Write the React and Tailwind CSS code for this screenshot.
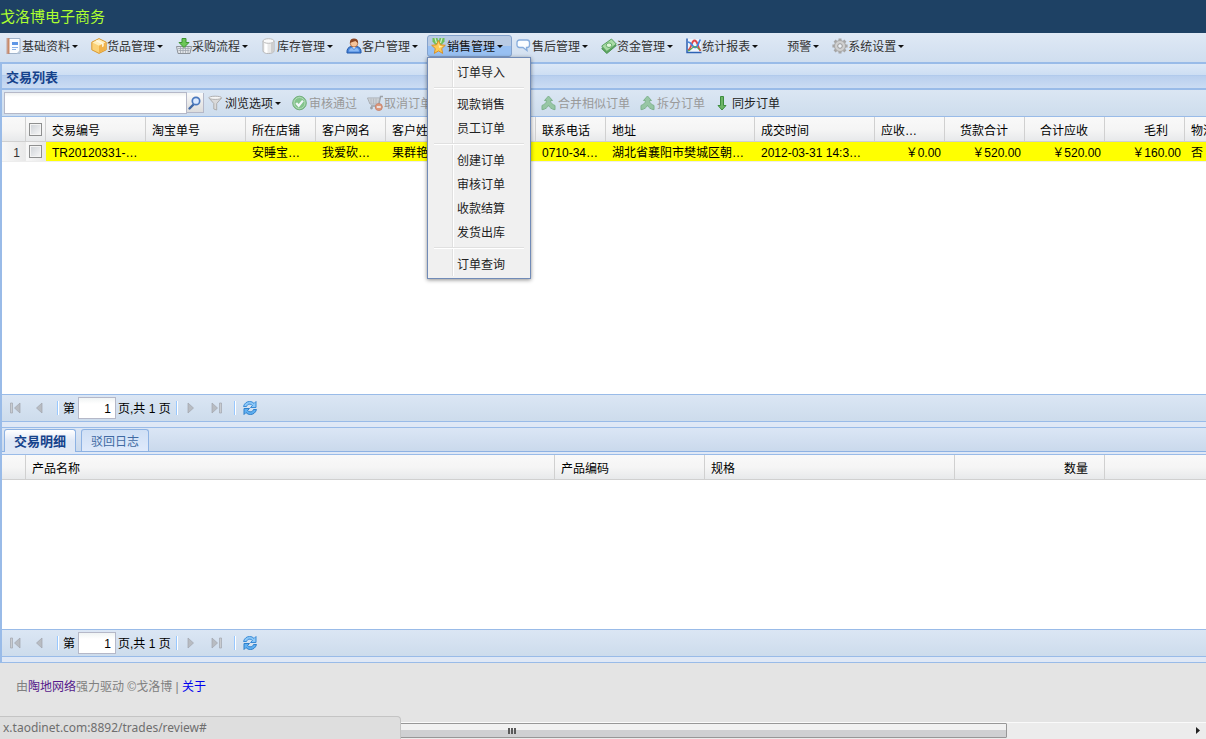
import { Fragment } from 'react';

function Icon({ children, className = '' }) {
  return (
    <svg viewBox="0 0 16 16" className={`h-4 w-4 shrink-0 ${className}`} aria-hidden="true">
      {children}
    </svg>
  );
}

function NotebookIcon() {
  return (
    <Icon>
      <path d="M2.500.5h11.500v15H2.500z" fill="#fbfdff" stroke="#9fb2c9" />
      <path d="M10.500 15.500l3.500-3.500v3.500z" fill="#b9c9dc" />
      <path d="M.5 1h3M.5 3h3M.5 5h3M.5 7h3M.5 9h3M.5 11h3M.5 13h3M.5 15h3" stroke="#b5603c" />
      <path d="M2.500.5v15" stroke="#c98b68" strokeWidth="1.500" />
      <path d="M6 4h6v3H6z" fill="#5f97e6" />
      <path d="M6 9.500h6M6 11.500h4" stroke="#8ab2e8" />
    </Icon>
  );
}

function BoxIcon() {
  return (
    <Icon>
      <path d="M8 .6l7.200 3.600v7.600L8 15.400.8 11.800V4.200z" fill="#fbd277" stroke="#d9982f" />
      <path d="M8 1.200l6.500 3.200L8 7.800 1.500 4.400z" fill="#ffeeba" />
      <path d="M8 7.800l6.700-3.400v7.200L8 14.900z" fill="#f0b24a" />
      <path d="M4.500 2.900l6.600 3.300v3l1.600-.9V5.400L6.200 2z" fill="#fff8e0" />
    </Icon>
  );
}

function BasketIcon() {
  return (
    <Icon>
      <path d="M.5 8.500h15l-1.500 7H2z" fill="#e2e5e8" stroke="#8d939a" />
      <path d="M2 10.500h12M2.500 12.500h11M4.500 9v6M7 9v6M9.500 9v6M12 9v6" stroke="#a0a6ae" strokeWidth=".8" />
      <path d="M6 .5h4v4h3L8 9.500 3 4.500h3z" fill="#6cc657" stroke="#3c9430" />
    </Icon>
  );
}

function DatabaseIcon() {
  return (
    <Icon>
      <path d="M2 3v10c0 1.500 2.500 2.500 5.500 2.500S13 14.500 13 13V3z" fill="#e9e9e9" stroke="#b5b5b5" />
      <path d="M3.500 5v9c1 .6 2 .9 3 1V5.500z" fill="#fff" />
      <path d="M10 5.500v9.300c1.200-.2 2-.6 2.500-1.200V4.500z" fill="#cfcfcf" />
      <ellipse cx="7.500" cy="3" rx="5.500" ry="2.300" fill="#fafafa" stroke="#bcbcbc" />
    </Icon>
  );
}

function UserIcon() {
  return (
    <Icon>
      <path d="M1 15c-.5-4 1.500-6 4-6.500h6c2.500.5 4.500 2.500 4 6.500z" fill="#4a86dc" stroke="#2358a8" />
      <path d="M3 13.500c0-2 1-3.300 3-3.500l2 2 2-2c2 .2 3 1.500 3 3.500z" fill="#8ab9f5" />
      <path d="M6 8.500l2 2.500 2-2.500z" fill="#fff" />
      <circle cx="8" cy="5.200" r="3.800" fill="#f6c49a" stroke="#a9653a" strokeWidth=".8" />
      <path d="M3.900 5C3.800 1.800 5.500.4 8 .4s4.300 1.400 4.100 4.600C10.800 4.300 10 3.500 9.500 3 7.500 4 5.500 4 3.900 5z" fill="#8a4524" />
    </Icon>
  );
}

function MedalIcon() {
  return (
    <Icon>
      <path d="M1.500 0h5l1 4L5 7.500 1.500 3.500z" fill="#6fbf5a" />
      <path d="M13.500 0h-5l-1 4L10 7.500l3.500-4z" fill="#6fbf5a" />
      <path d="M4 0l1.500 5M11 0L9.500 5" stroke="#d3efc6" strokeWidth="1.200" />
      <path d="M7.500 2.500l2 4.300 4.800.5-3.600 3.300 1 4.800-4.200-2.500-4.200 2.500 1-4.800L.7 7.300l4.800-.5z" fill="#fdc952" stroke="#d8912a" />
      <path d="M7.500 5l1.200 3 3 .3L8 10z" fill="#ffeeb0" />
    </Icon>
  );
}

function SpeechIcon() {
  return (
    <Icon>
      <path
        d="M3.500 2h7.500c1.500 0 2.500 1 2.500 2.500V7c0 1.500-1 2.500-2.500 2.500h-.5l.5 3-4-3H3.500C2 9.500 1 8.500 1 7V4.500C1 3 2 2 3.500 2z"
        fill="#fafdff"
        stroke="#86acdc"
        strokeWidth="1.300"
      />
    </Icon>
  );
}

function MoneyIcon() {
  return (
    <Icon>
      <path d="M.7 10.500L10.500 3l4.800 4.500-9.500 8z" fill="#5aa65c" stroke="#4c9053" />
      <path d="M.7 8L10.500 1l4.800 5L5.800 13.500z" fill="#a9dba5" stroke="#5aa161" />
      <ellipse cx="8" cy="7.200" rx="2.800" ry="2.300" fill="#dff5da" stroke="#65ad67" />
    </Icon>
  );
}

function ChartIcon() {
  return (
    <Icon>
      <path d="M2 1h13v13H2z" fill="#eef4fc" />
      <path d="M1 .5v14h14.500" fill="none" stroke="#2d62b4" strokeWidth="1.500" />
      <path d="M2 12C6 11 5 2.500 8.500 2.500S11 8 14.500 13" fill="none" stroke="#e04848" strokeWidth="1.800" />
      <path d="M2 4c4 0 4 5.500 7 5.500S12 5 14.500 1.500" fill="none" stroke="#4282dc" strokeWidth="1.700" />
      <path d="M2 13c3-1 4.500-4.500 7-4.500s3 3 5.500 3.500" fill="none" stroke="#57ab4c" strokeWidth="1.200" />
    </Icon>
  );
}

function GearIcon() {
  return (
    <Icon>
      <g stroke="#a6a6a6" strokeWidth="3">
        <path d="M8 .4v15.200M.4 8h15.200M2.600 2.600l10.800 10.800M13.400 2.600L2.600 13.400" />
      </g>
      <circle cx="8" cy="8" r="5.500" fill="#d0d0d0" stroke="#a8a8a8" />
      <circle cx="8" cy="8" r="2.300" fill="#eef3f9" stroke="#999" />
    </Icon>
  );
}

function SearchIcon() {
  return (
    <Icon>
      <path d="M2.500 13.500l3.500-3.500" stroke="#3f67a3" strokeWidth="2.400" strokeLinecap="round" />
      <circle cx="9" cy="6" r="3.700" fill="#dbeaff" stroke="#4a78bd" strokeWidth="1.700" />
    </Icon>
  );
}

function FunnelIcon() {
  return (
    <Icon>
      <path d="M1 3l4.800 5.500V14l2.900 1V8.500L13.500 3z" fill="#dadada" stroke="#adadad" />
      <ellipse cx="7.200" cy="2.800" rx="6.400" ry="1.600" fill="#f6f6f6" stroke="#b0b0b0" />
    </Icon>
  );
}

function AcceptIcon() {
  return (
    <Icon className="opacity-70">
      <circle cx="7.500" cy="8" r="6.800" fill="#62b862" stroke="#4a9a4e" />
      <circle cx="7.500" cy="8" r="5.500" fill="none" stroke="#a6d9a2" />
      <path d="M4.200 8l2.500 2.800 4.200-5.200" fill="none" stroke="#fff" strokeWidth="2.200" />
    </Icon>
  );
}

function CartRemoveIcon() {
  return (
    <Icon className="opacity-60">
      <path d="M16 1.500h-2.500l-2 9.500H4" fill="none" stroke="#777" strokeWidth="1.400" />
      <path d="M.5 3h12.300l-1.400 6H3z" fill="#e2e2e2" stroke="#888" />
      <path d="M1.500 5h11M2.500 7h9.500M4 3.500v5.500M6.500 3.500v5.500M9 3.500v5.500" stroke="#999" strokeWidth=".8" />
      <circle cx="4.500" cy="13" r="1.400" fill="#777" />
      <circle cx="11.800" cy="12" r="3.500" fill="#e66a32" stroke="#c14c1c" />
      <path d="M9.800 12h4" stroke="#fff" strokeWidth="1.600" />
    </Icon>
  );
}

function MergeIcon() {
  return (
    <Icon className="opacity-60">
      <path
        d="M7.500 1l4 4.500H9.500c.2 2.200 1 3.500 4.500 5v4.200c-3.500-.5-5.500-2.200-6.500-4.400-1 2.200-3 3.900-6.500 4.400v-4.200c3.500-1.500 4.300-2.800 4.500-5h-2z"
        fill="#6fb573"
        stroke="#46934e"
      />
    </Icon>
  );
}

function DownIcon() {
  return (
    <Icon>
      <path d="M5.500 1.500h3v9h2.500L7 15l-4-4.500h2.500z" fill="#6db566" stroke="#3d8d3f" />
    </Icon>
  );
}

function RefreshIcon() {
  return (
    <Icon>
      <path d="M1.500 6.500C2.500 3 5 1.500 7.500 1.500c2 0 3.300.7 4.500 2l2-2v6H8.500l2-2c-2-2-5-1.800-6 1z" fill="#8cc8f8" stroke="#3a8bd6" />
      <path d="M14.500 9.500c-1 3.500-3.500 5-6 5-2 0-3.300-.7-4.500-2l-2 2v-6h5.500l-2 2c2 2 5 1.800 6-1z" fill="#5fb0f2" stroke="#2f7fc9" />
    </Icon>
  );
}

function Caret() {
  return (
    <svg viewBox="0 0 6 3" className="ml-px h-[3px] w-1.5 shrink-0" aria-hidden="true">
      <path d="M0 0h6L3 3z" fill="#111" />
    </svg>
  );
}

const menus = [
  { label: '基础资料', icon: NotebookIcon },
  { label: '货品管理', icon: BoxIcon },
  { label: '采购流程', icon: BasketIcon },
  { label: '库存管理', icon: DatabaseIcon },
  { label: '客户管理', icon: UserIcon },
  {
    label: '销售管理',
    icon: MedalIcon,
    open: true,
    groups: [
      ['订单导入'],
      ['现款销售', '员工订单'],
      ['创建订单', '审核订单', '收款结算', '发货出库'],
      ['订单查询'],
    ],
  },
  { label: '售后管理', icon: SpeechIcon },
  { label: '资金管理', icon: MoneyIcon },
  { label: '统计报表', icon: ChartIcon },
  { label: '预警', icon: Icon },
  { label: '系统设置', icon: GearIcon },
];

const tradeColumns = [
  { title: '交易编号', value: 'TR20120331-…', width: 'w-[100px]' },
  { title: '淘宝单号', value: '', width: 'w-[100px]' },
  { title: '所在店铺', value: '安睡宝…', width: 'w-[70px]' },
  { title: '客户网名', value: '我爱砍…', width: 'w-[70px]' },
  { title: '客户姓名', value: '果群艳', width: 'w-[70px]' },
  { title: '', value: '', width: 'w-[80px]' },
  { title: '联系电话', value: '0710-34…', width: 'w-[70px]' },
  { title: '地址', value: '湖北省襄阳市樊城区朝…', width: 'w-[149px]' },
  { title: '成交时间', value: '2012-03-31 14:3…', width: 'w-[120px]' },
  { title: '应收…', value: '￥0.00', width: 'w-[70px]', money: true, clipped: true },
  { title: '货款合计', value: '￥520.00', width: 'w-[80px]', money: true },
  { title: '合计应收', value: '￥520.00', width: 'w-[80px]', money: true },
  { title: '毛利', value: '￥160.00', width: 'w-[80px]', money: true },
  { title: '物流', value: '否', width: 'w-[80px]' },
];

function DropMenu({ groups }) {
  return (
    <div className="absolute top-full left-0 z-10 w-[104px] border border-[#718bb7] bg-[#f0f0f0] py-0.5 shadow-[0_1px_4px_rgba(0,0,0,0.45)]">
      <div className="absolute inset-y-0.5 left-6 w-0.5 border-r border-l border-r-white border-l-[#e0e0e0]" />
      {groups.map((items, i) => (
        <Fragment key={items[0]}>
          {i > 0 && (
            <div className="relative px-1.5 py-[3px]">
              <div className="h-0.5 border-t border-b border-t-[#e0e0e0] border-b-white" />
            </div>
          )}
          {items.map((item) => (
            <a key={item} href="#" className="relative block h-6 pl-[29px] leading-[26px] text-[#222]">
              {item}
            </a>
          ))}
        </Fragment>
      ))}
    </div>
  );
}

function MenuButton({ menu }) {
  const MenuIcon = menu.icon;
  return (
    <div className="relative">
      <button
        type="button"
        className={`flex h-[22px] items-center rounded-[3px] border pr-2 pl-[3px] whitespace-nowrap ${
          menu.open
            ? 'border-[#84a2cc] bg-linear-to-b from-[#b9cbe4] from-50% to-[#98c0f2] to-50% text-[#111]'
            : 'border-transparent text-[#333]'
        }`}
      >
        <MenuIcon />
        <span className="pt-0.5 pr-px">{menu.label}</span>
        <Caret />
      </button>
      {menu.open && <DropMenu groups={menu.groups} />}
    </div>
  );
}

function ToolButton({ icon: ToolIcon, label, disabled, caret, className = 'px-[5px]' }) {
  return (
    <button
      type="button"
      disabled={disabled}
      className={`flex h-[22px] items-center gap-px whitespace-nowrap text-[#222] disabled:text-[#999] ${className}`}
    >
      <ToolIcon />
      <span className="pt-0.5">{label}</span>
      {caret && <Caret />}
    </button>
  );
}

function Check({ label }) {
  return (
    <input
      type="checkbox"
      aria-label={label}
      className="block h-[13px] w-[13px] appearance-none border border-[#8e8f8f] bg-linear-to-br from-[#cdd1d6] to-[#f8f8f8] shadow-[inset_0_0_0_1px_#f4f4f4]"
    />
  );
}

const headRow = 'h-[25px] bg-linear-to-b from-[#f9f9f9] via-[#f5f5f5] to-[#e6e8ea]';
const headCell = 'border-r border-b border-[#d0d0d0] px-1.5 pt-1 font-normal whitespace-nowrap';

function TradeTable() {
  return (
    <table className="w-full table-fixed border-separate border-spacing-0 text-black">
      <thead>
        <tr className={headRow}>
          <th className={`${headCell} w-6`} />
          <th className="w-5 border-r border-b border-[#d0d0d0] pl-[3px]">
            <Check label="全选" />
          </th>
          {tradeColumns.map((col, i) => (
            <th
              key={i}
              className={`${headCell} ${col.width} overflow-hidden ${
                col.money && !col.clipped ? 'pr-4 text-right' : 'text-left'
              }`}
            >
              {col.title}
            </th>
          ))}
        </tr>
      </thead>
      <tbody>
        <tr className="h-5 bg-[#ffff00]">
          <td className="border-b border-[#ededed] bg-linear-to-r from-[#f8f8f8] to-[#e8e8e8] pt-0.5 pr-1.5 text-right text-[#333]">
            1
          </td>
          <td className="border-b border-[#ededed] bg-linear-to-r from-[#f8f8f8] to-[#e8e8e8] pl-[3px]">
            <Check label="选择 TR20120331" />
          </td>
          {tradeColumns.map((col, i) => (
            <td
              key={i}
              className={`overflow-hidden border-b border-[#ededed] pt-0.5 whitespace-nowrap ${
                col.money ? 'pr-1 text-right' : 'px-1.5'
              }`}
            >
              {col.value}
            </td>
          ))}
        </tr>
      </tbody>
    </table>
  );
}

function DetailTable() {
  return (
    <table className="w-full table-fixed border-separate border-spacing-0 text-black">
      <thead>
        <tr className={headRow}>
          <th className={`${headCell} w-6`} />
          <th className={`${headCell} w-[529px] text-left`}>产品名称</th>
          <th className={`${headCell} w-[150px] text-left`}>产品编码</th>
          <th className={`${headCell} w-[250px] text-left`}>规格</th>
          <th className={`${headCell} w-[150px] pr-4 text-right`}>数量</th>
          <th className="border-b border-[#d0d0d0]" />
        </tr>
      </thead>
    </table>
  );
}

function PageArrow({ label, d, bar, className }) {
  return (
    <button type="button" aria-label={label} disabled className={className}>
      <svg viewBox="0 0 12 12" className="h-3 w-3" aria-hidden="true">
        <path d={d} fill="#b8bcc2" stroke="#a0a5ad" strokeWidth=".7" />
        {bar && <path d={bar} fill="#c9ccd1" stroke="#a0a5ad" strokeWidth=".7" />}
      </svg>
    </button>
  );
}

function Separator({ className }) {
  return <span className={`h-3.5 w-0.5 border-r border-l border-r-white border-l-[#98c8ff] ${className}`} />;
}

function Pager({ id }) {
  return (
    <div className="flex h-7 shrink-0 items-center border-t border-b border-[#99bbe8] bg-linear-to-b from-[#dbe6f4] to-[#cddcec] pl-[7px] text-black">
      <PageArrow label="首页" d="M11 1v10L5.500 6z" bar="M1.500 1h2v10h-2z" />
      <PageArrow label="上一页" d="M9 1v10L3.500 6z" className="ml-3" />
      <Separator className="mr-1 ml-3" />
      <label htmlFor={id} className="pt-0.5">
        第
      </label>
      <input
        id={id}
        type="text"
        defaultValue="1"
        className="mr-0.5 ml-[3px] h-[22px] w-[38px] border border-[#b5b8c8] bg-linear-to-b from-[#f0f4f4] to-white to-30% pt-0.5 pr-1 text-right"
      />
      <span className="pt-0.5">页,共 1 页</span>
      <Separator className="ml-[5px]" />
      <PageArrow label="下一页" d="M3 1v10l5.500-5z" className="ml-[7px]" />
      <PageArrow label="末页" d="M1 1v10l5.500-5z" bar="M8.500 1h2v10h-2z" className="ml-3.5" />
      <Separator className="ml-[11px]" />
      <button type="button" aria-label="刷新" className="ml-1.5">
        <RefreshIcon />
      </button>
    </div>
  );
}

function App() {
  return (
    <div className="flex h-screen min-h-[600px] flex-col overflow-hidden bg-[#e4e4e4] font-['Liberation_Sans','Noto_Sans_CJK_SC',sans-serif] text-[12px] leading-4">
      <header className="h-[33px] shrink-0 bg-[#1e4164]">
        <h1 className="text-[15px] leading-[34px] text-[#adff2f]">戈洛博电子商务</h1>
      </header>

      <nav className="flex h-[30px] shrink-0 items-start border-b border-[#99bbe8] bg-linear-to-b from-[#dfe9f5] to-[#d0deef] pt-0.5 pl-0.5">
        {menus.map((menu) => (
          <MenuButton key={menu.label} menu={menu} />
        ))}
      </nav>

      <main className="flex min-h-0 flex-1 flex-col border-t border-b border-l-2 border-[#99bbe8] bg-[#dfe8f6]">
        <section className="flex min-h-0 flex-1 flex-col">
          <h2 className="h-[25px] shrink-0 border-b border-[#99bbe8] bg-[linear-gradient(#dce8f7_0,#cddef3_11px,#a9c5ea_11px,#b9cfee_12px,#cbdcf3_100%)] pl-1 text-[13px] leading-7 font-bold text-[#15428b]">
            交易列表
          </h2>
          <div className="flex h-7 shrink-0 items-center border-t border-b border-[#99bbe8] bg-linear-to-b from-[#dbe6f3] to-[#cedded] pl-0.5">
            <input
              type="text"
              aria-label="搜索"
              className="h-[22px] w-[183px] border border-[#b5b8c8] bg-linear-to-b from-[#eef0f0] to-white to-20% px-1"
            />
            <button
              type="button"
              aria-label="查找"
              className="flex h-5 w-[17px] items-center justify-center border-r border-b border-[#b5b8c8] bg-linear-to-b from-[#fafafa] to-[#dcdcdc]"
            >
              <SearchIcon />
            </button>
            <ToolButton icon={FunnelIcon} label="浏览选项" caret className="pr-1 pl-1" />
            <ToolButton icon={AcceptIcon} label="审核通过" disabled className="ml-0.5 px-[5px]" />
            <ToolButton icon={CartRemoveIcon} label="取消订单" disabled />
            <ToolButton icon={MergeIcon} label="合并相似订单" disabled className="ml-[99px] px-[5px]" />
            <ToolButton icon={MergeIcon} label="拆分订单" disabled />
            <ToolButton icon={DownIcon} label="同步订单" />
          </div>
          <div className="min-h-0 flex-1 overflow-hidden bg-white">
            <TradeTable />
          </div>
          <Pager id="trade-page" />
        </section>

        <section className="mt-[5px] shrink-0 border-t border-[#99bbe8]">
          <div className="flex h-6 items-end gap-[5px] border-b border-[#8db2e3] bg-linear-to-b from-[#dbe6f5] to-[#cad9ec] pl-0.5" role="tablist">
            <button
              type="button"
              role="tab"
              aria-selected="true"
              className="-mb-px h-[23px] rounded-t-[3px] border border-b-0 border-[#8db2e3] bg-linear-to-b from-white to-[#dfe8f6] to-50% px-[9px] pt-0.5 text-[13px] font-bold text-[#15428b]"
            >
              交易明细
            </button>
            <button
              type="button"
              role="tab"
              aria-selected="false"
              className="h-[22px] rounded-t-[3px] border border-b-0 border-[#8db2e3] bg-linear-to-b from-[#cfdff5] to-[#dfeafb] px-[9px] pt-0.5 text-[#416aa3]"
            >
              驳回日志
            </button>
          </div>
          <div className="h-[3px] border-b border-[#99bbe8] bg-[#dfe8f6]" />
          <div className="h-[174px] overflow-hidden bg-white">
            <DetailTable />
          </div>
          <Pager id="detail-page" />
          <div className="h-[5px]" />
        </section>
      </main>

      <footer className="h-[59px] shrink-0 pt-4 pl-4 text-[#808080]">
        由
        <a href="#" className="text-[#551a8b]">
          陶地网络
        </a>
        强力驱动 ©戈洛博 |{' '}
        <a href="#" className="text-[#0000ee]">
          关于
        </a>
      </footer>

      <div className="relative h-[17px] shrink-0 border-t border-[#fafafa] bg-[#ececec]">
        <div className="mr-[199px] flex h-[15px] items-center justify-center rounded-[1px] border border-[#979797] bg-linear-to-b from-[#f1f1f1] from-45% to-[#cfd0d2] to-50% pl-4">
          <div className="flex gap-px">
            <span className="h-1.5 w-0.5 bg-[#5a5a5a]" />
            <span className="h-1.5 w-0.5 bg-[#5a5a5a]" />
            <span className="h-1.5 w-0.5 bg-[#5a5a5a]" />
          </div>
        </div>
        <svg viewBox="0 0 4 7" className="absolute top-1 right-1.5 h-[7px] w-1" aria-hidden="true">
          <path d="M0 0v7l4-3.500z" fill="#222" />
        </svg>
        <div className="absolute bottom-0 left-0 h-[23px] w-[401px] rounded-tr-[4px] border-t border-r border-[#c4c4c4] bg-[#dedede] pl-[3px] font-['Noto_Sans',sans-serif] text-[12px] leading-[22px] text-[#6e6e6e]">
          x.taodinet.com:8892/trades/review#
        </div>
      </div>
    </div>
  );
}

export default App;
